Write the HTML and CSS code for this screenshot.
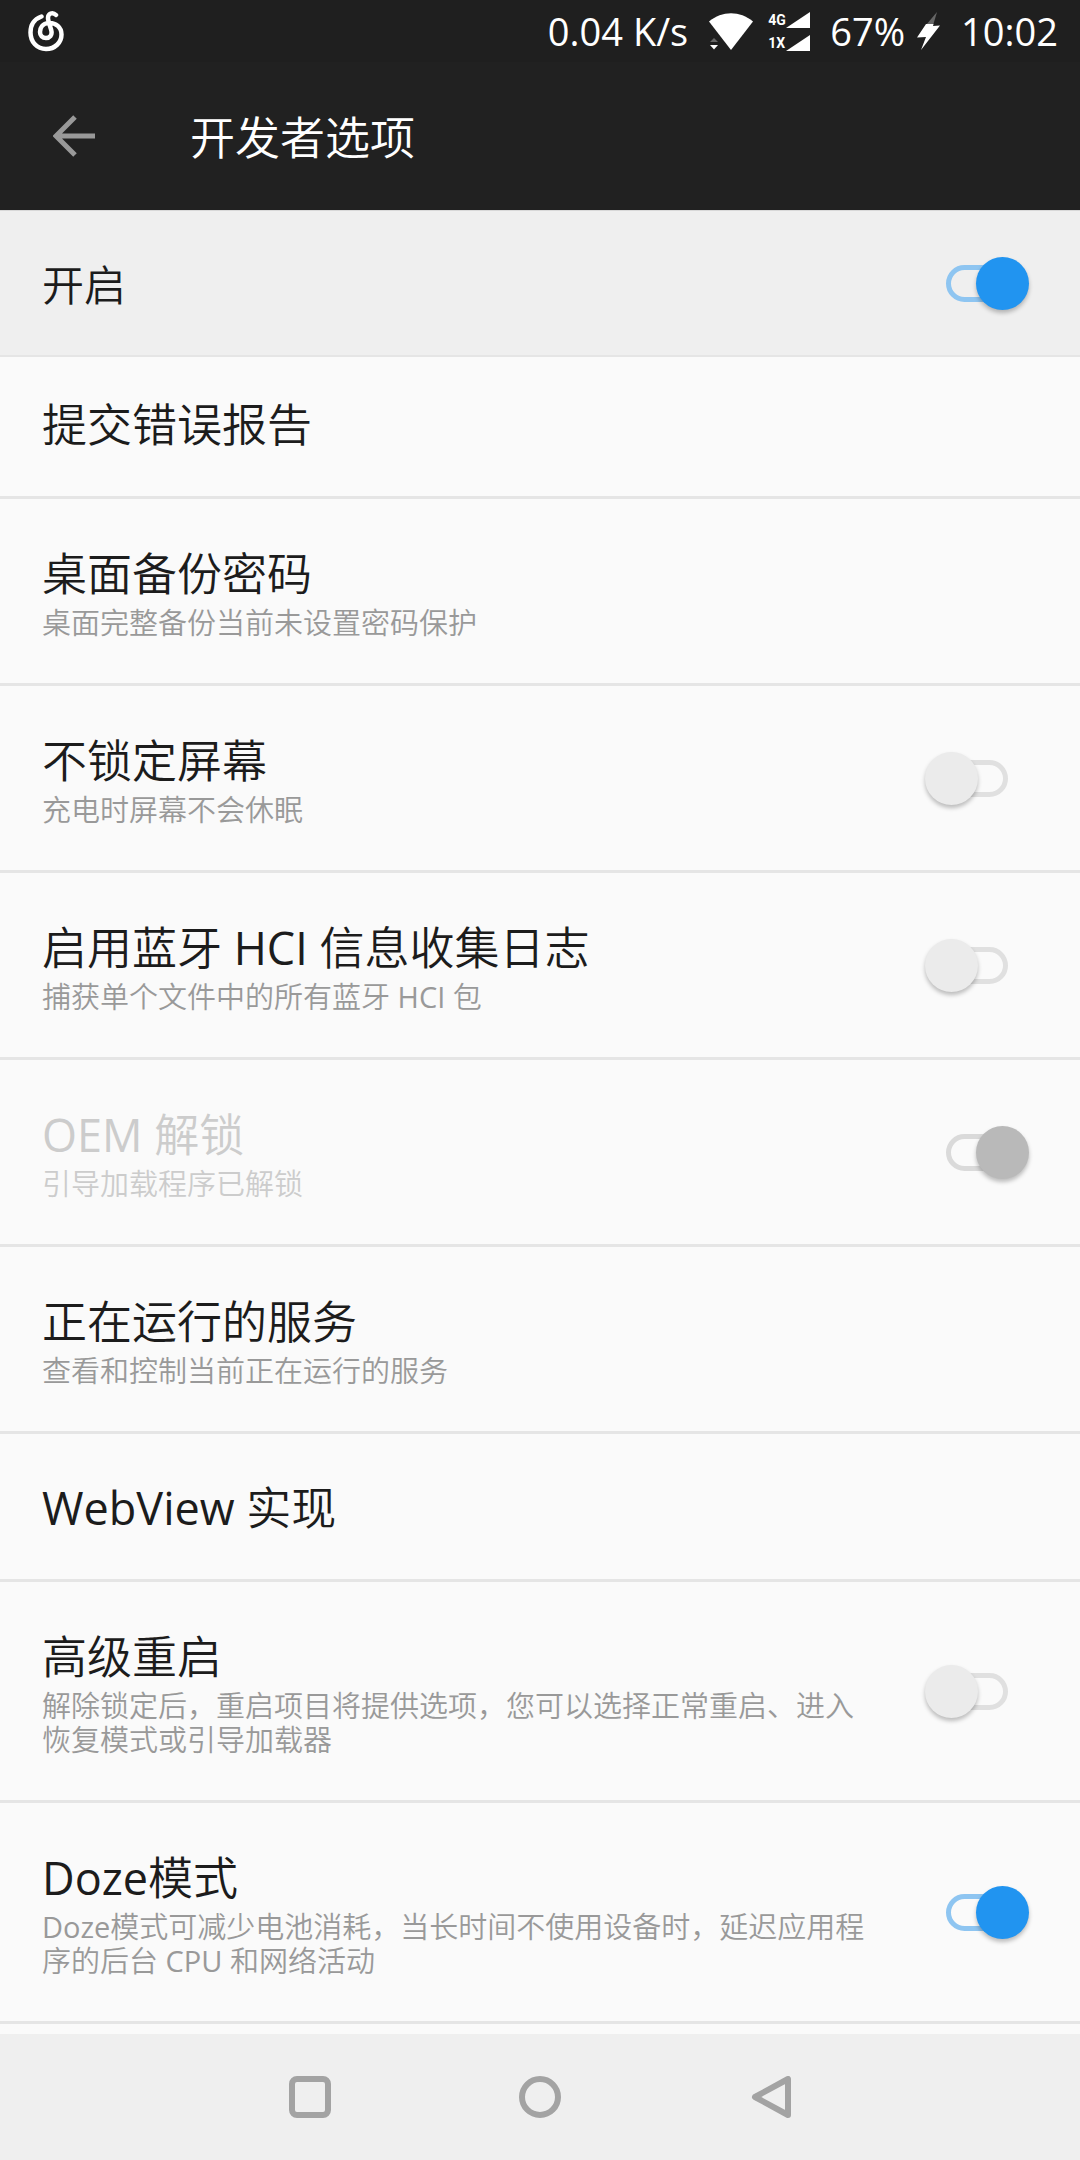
FILE: index.html
```html
<!DOCTYPE html>
<html lang="zh-CN">
<head>
    <meta charset="UTF-8">
    <meta name="viewport" content="width=device-width, initial-scale=1.0">
    <title>开发者选项</title>
    <link rel="stylesheet" href="styles.css">
</head>
<body>
    <div class="status-bar">
        <svg class="music-icon" viewBox="0 -1 36 42" fill="none" stroke="#fff" stroke-width="4.500" stroke-linecap="round">
            <path d="M13.500 5.500C6.500 8 2.500 14 2.500 21.500C2.500 31 9 38 18 38C27 38 33.500 31.500 33.500 23.500C33.500 16.500 28 11.500 20.500 12C14.500 12.500 12 17 12 21C12 24.500 14.500 27 18 27C22 27 24 24 23.500 20.500C23 17 20 10.500 20 7C20 2.500 24.500 0.500 28 4"/>
        </svg>
        <span class="net-speed">0.04 K/s</span>
        <svg class="wifi-icon" viewBox="0 0 46 38">
            <path d="M1 9.500C14-1.500 32-1.500 45 9.500L23 38Z" fill="#fff"/>
            <path d="M2 30L6 26L10 30Z" fill="#666"/>
            <path d="M2 33L10 33L6 37.500Z" fill="#fff"/>
        </svg>
        <div class="signals">
            <div class="signal">
                <span>4G</span>
                <svg viewBox="0 0 24 16"><path d="M0 16L24 0V16Z"/></svg>
            </div>
            <div class="signal">
                <span>1X</span>
                <svg viewBox="0 0 24 16"><path d="M0 16L24 0V16Z"/></svg>
            </div>
        </div>
        <span class="battery">67%</span>
        <svg class="bolt-icon" viewBox="0 0 24 38">
            <path d="M20 0L9 13L16 13.500Z" fill="#666"/>
            <path d="M9 12H16.500L16 14L23 13.500L4 38L9 25L0 25.500Z" fill="#fff"/>
        </svg>
        <span class="clock">10:02</span>
    </div>

    <header>
        <button class="back-button" type="button" aria-label="返回">
            <svg viewBox="0 0 42 42" fill="none" stroke="#999" stroke-width="5">
                <path d="M22 2L3 21L22 40M3 21H42"/>
            </svg>
        </button>
        <h1>开发者选项</h1>
    </header>

    <label class="switch-bar">
        <span>开启</span>
        <input class="switch" type="checkbox" role="switch" checked>
    </label>

    <main>
        <div class="row first">
            <div class="text"><div class="title">提交错误报告</div></div>
        </div>
        <div class="row has-summary">
            <div class="text">
                <div class="title">桌面备份密码</div>
                <div class="summary">桌面完整备份当前未设置密码保护</div>
            </div>
        </div>
        <label class="row has-summary">
            <span class="text">
                <span class="title">不锁定屏幕</span>
                <span class="summary">充电时屏幕不会休眠</span>
            </span>
            <input class="switch" type="checkbox" role="switch">
        </label>
        <label class="row has-summary">
            <span class="text">
                <span class="title">启用蓝牙 HCI 信息收集日志</span>
                <span class="summary">捕获单个文件中的所有蓝牙 HCI 包</span>
            </span>
            <input class="switch" type="checkbox" role="switch">
        </label>
        <label class="row has-summary disabled">
            <span class="text">
                <span class="title">OEM 解锁</span>
                <span class="summary">引导加载程序已解锁</span>
            </span>
            <input class="switch" type="checkbox" role="switch" checked disabled>
        </label>
        <div class="row has-summary">
            <div class="text">
                <div class="title">正在运行的服务</div>
                <div class="summary">查看和控制当前正在运行的服务</div>
            </div>
        </div>
        <div class="row">
            <div class="text"><div class="title">WebView 实现</div></div>
        </div>
        <label class="row has-summary">
            <span class="text">
                <span class="title">高级重启</span>
                <span class="summary">解除锁定后，重启项目将提供选项，您可以选择正常重启、进入恢复模式或引导加载器</span>
            </span>
            <input class="switch" type="checkbox" role="switch">
        </label>
        <label class="row has-summary">
            <span class="text">
                <span class="title">Doze模式</span>
                <span class="summary">Doze模式可减少电池消耗，当长时间不使用设备时，延迟应用程序的后台 CPU 和网络活动</span>
            </span>
            <input class="switch" type="checkbox" role="switch" checked>
        </label>
    </main>

    <nav>
        <button type="button" aria-label="最近任务">
            <svg viewBox="0 0 42 42"><rect x="3" y="3" width="36" height="36" rx="5"/></svg>
        </button>
        <button type="button" aria-label="主屏幕">
            <svg viewBox="0 0 42 42"><circle cx="21" cy="21" r="18"/></svg>
        </button>
        <button type="button" aria-label="返回">
            <svg viewBox="0 0 42 42"><path d="M39 3V39L6 21Z" stroke-linejoin="round"/></svg>
        </button>
    </nav>
</body>
</html>
```
FILE: styles.css
```css
* {
    box-sizing: border-box;
}
body {
    margin: 0;
    min-height: 100vh;
    display: flex;
    flex-direction: column;
    font-family: "Open Sans", "Noto Sans CJK SC DemiLight", "Noto Sans CJK SC", sans-serif;
    font-weight: 400;
    color: #1c1c1c;
    background-color: #fafafa;
}
button {
    padding: 0;
    border: none;
    background: none;
    cursor: pointer;
}
svg {
    display: block;
}

/* status bar */
.status-bar {
    display: flex;
    align-items: center;
    height: 62px;
    padding: 0 22px 0 28px;
    background-color: #1f1f1f;
    color: #fff;
    font-size: 38px;
    line-height: 62px;
}
.music-icon {
    width: 36px;
    height: 42px;
}
.net-speed {
    margin-left: auto;
}
.wifi-icon {
    width: 46px;
    height: 38px;
    margin-left: 20px;
}
.signals {
    display: flex;
    flex-direction: column;
    gap: 7px;
    margin: 0 20px 0 14px;
}
.signal {
    display: flex;
    align-items: flex-end;
    justify-content: space-between;
    width: 42px;
    font-family: Roboto, sans-serif;
    font-size: 14px;
    font-weight: bold;
    line-height: 16px;
}
.signal svg {
    width: 24px;
    height: 16px;
    fill: #fff;
}
.bolt-icon {
    width: 24px;
    height: 38px;
    margin: 0 20px 0 12px;
}

/* title bar */
header {
    display: flex;
    align-items: center;
    height: 149px;
    padding-left: 53px;
    background-color: #212121;
    border-bottom: 1px solid #d8d8d8;
}
.back-button svg {
    width: 42px;
    height: 42px;
}
h1 {
    margin: 4px 0 0 95px;
    color: #fff;
    font-size: 45px;
    font-weight: 400;
    line-height: 62px;
}

.switch-bar {
    display: flex;
    align-items: center;
    justify-content: space-between;
    height: 146px;
    padding: 0 51px 0 42px;
    background-color: #efefef;
    border-bottom: 2px solid #e5e5e5;
    font-size: 42px;
    line-height: 62px;
}
.switch-bar span {
    padding-top: 4px;
}

/* preference list */
main {
    flex: 1;
}
.row {
    display: flex;
    align-items: center;
    gap: 50px;
    min-height: 148px;
    padding: 42px 51px 40px 42px;
    border-bottom: 3px solid #e5e5e5;
}
.row.first {
    min-height: 142px;
    padding-top: 37px;
    padding-bottom: 40px;
}
.row.has-summary {
    padding-top: 44px;
    padding-bottom: 43px;
}
.text {
    flex: 1;
}
.title {
    display: block;
    font-size: 45px;
    line-height: 62px;
}
.summary {
    display: block;
    margin-top: 1px;
    color: #999;
    font-size: 29px;
    line-height: 34px;
}
.disabled .title,
.disabled .summary {
    color: #ccc;
}

/* switch */
.switch {
    appearance: none;
    display: grid;
    align-items: center;
    flex: none;
    width: 104px;
    height: 53px;
    margin: 0;
    cursor: pointer;
}
.switch::before,
.switch::after {
    content: '';
    grid-area: 1 / 1;
}
.switch::before {
    justify-self: center;
    width: 62px;
    height: 37px;
    box-sizing: border-box;
    border: 5px solid #e0e0e0;
    border-radius: 19px;
}
.switch::after {
    justify-self: start;
    width: 53px;
    height: 53px;
    border-radius: 50%;
    background-color: #ebebeb;
    box-shadow: 0 3px 4px rgba(0, 0, 0, 0.25);
}
.switch:checked::before {
    border-color: #8ec5f1;
}
.switch:checked::after {
    justify-self: end;
    background-color: #2194f0;
}
.switch:disabled::before {
    border-color: #dadada;
}
.switch:disabled::after {
    background-color: #b9b9b9;
}

/* navigation keys */
nav {
    display: flex;
    justify-content: center;
    background-color: #efefef;
}
nav button {
    display: flex;
    align-items: center;
    justify-content: center;
    width: 230px;
    height: 126px;
}
nav svg {
    width: 42px;
    height: 42px;
    fill: none;
    stroke: #a3a3a3;
    stroke-width: 6;
}
```
